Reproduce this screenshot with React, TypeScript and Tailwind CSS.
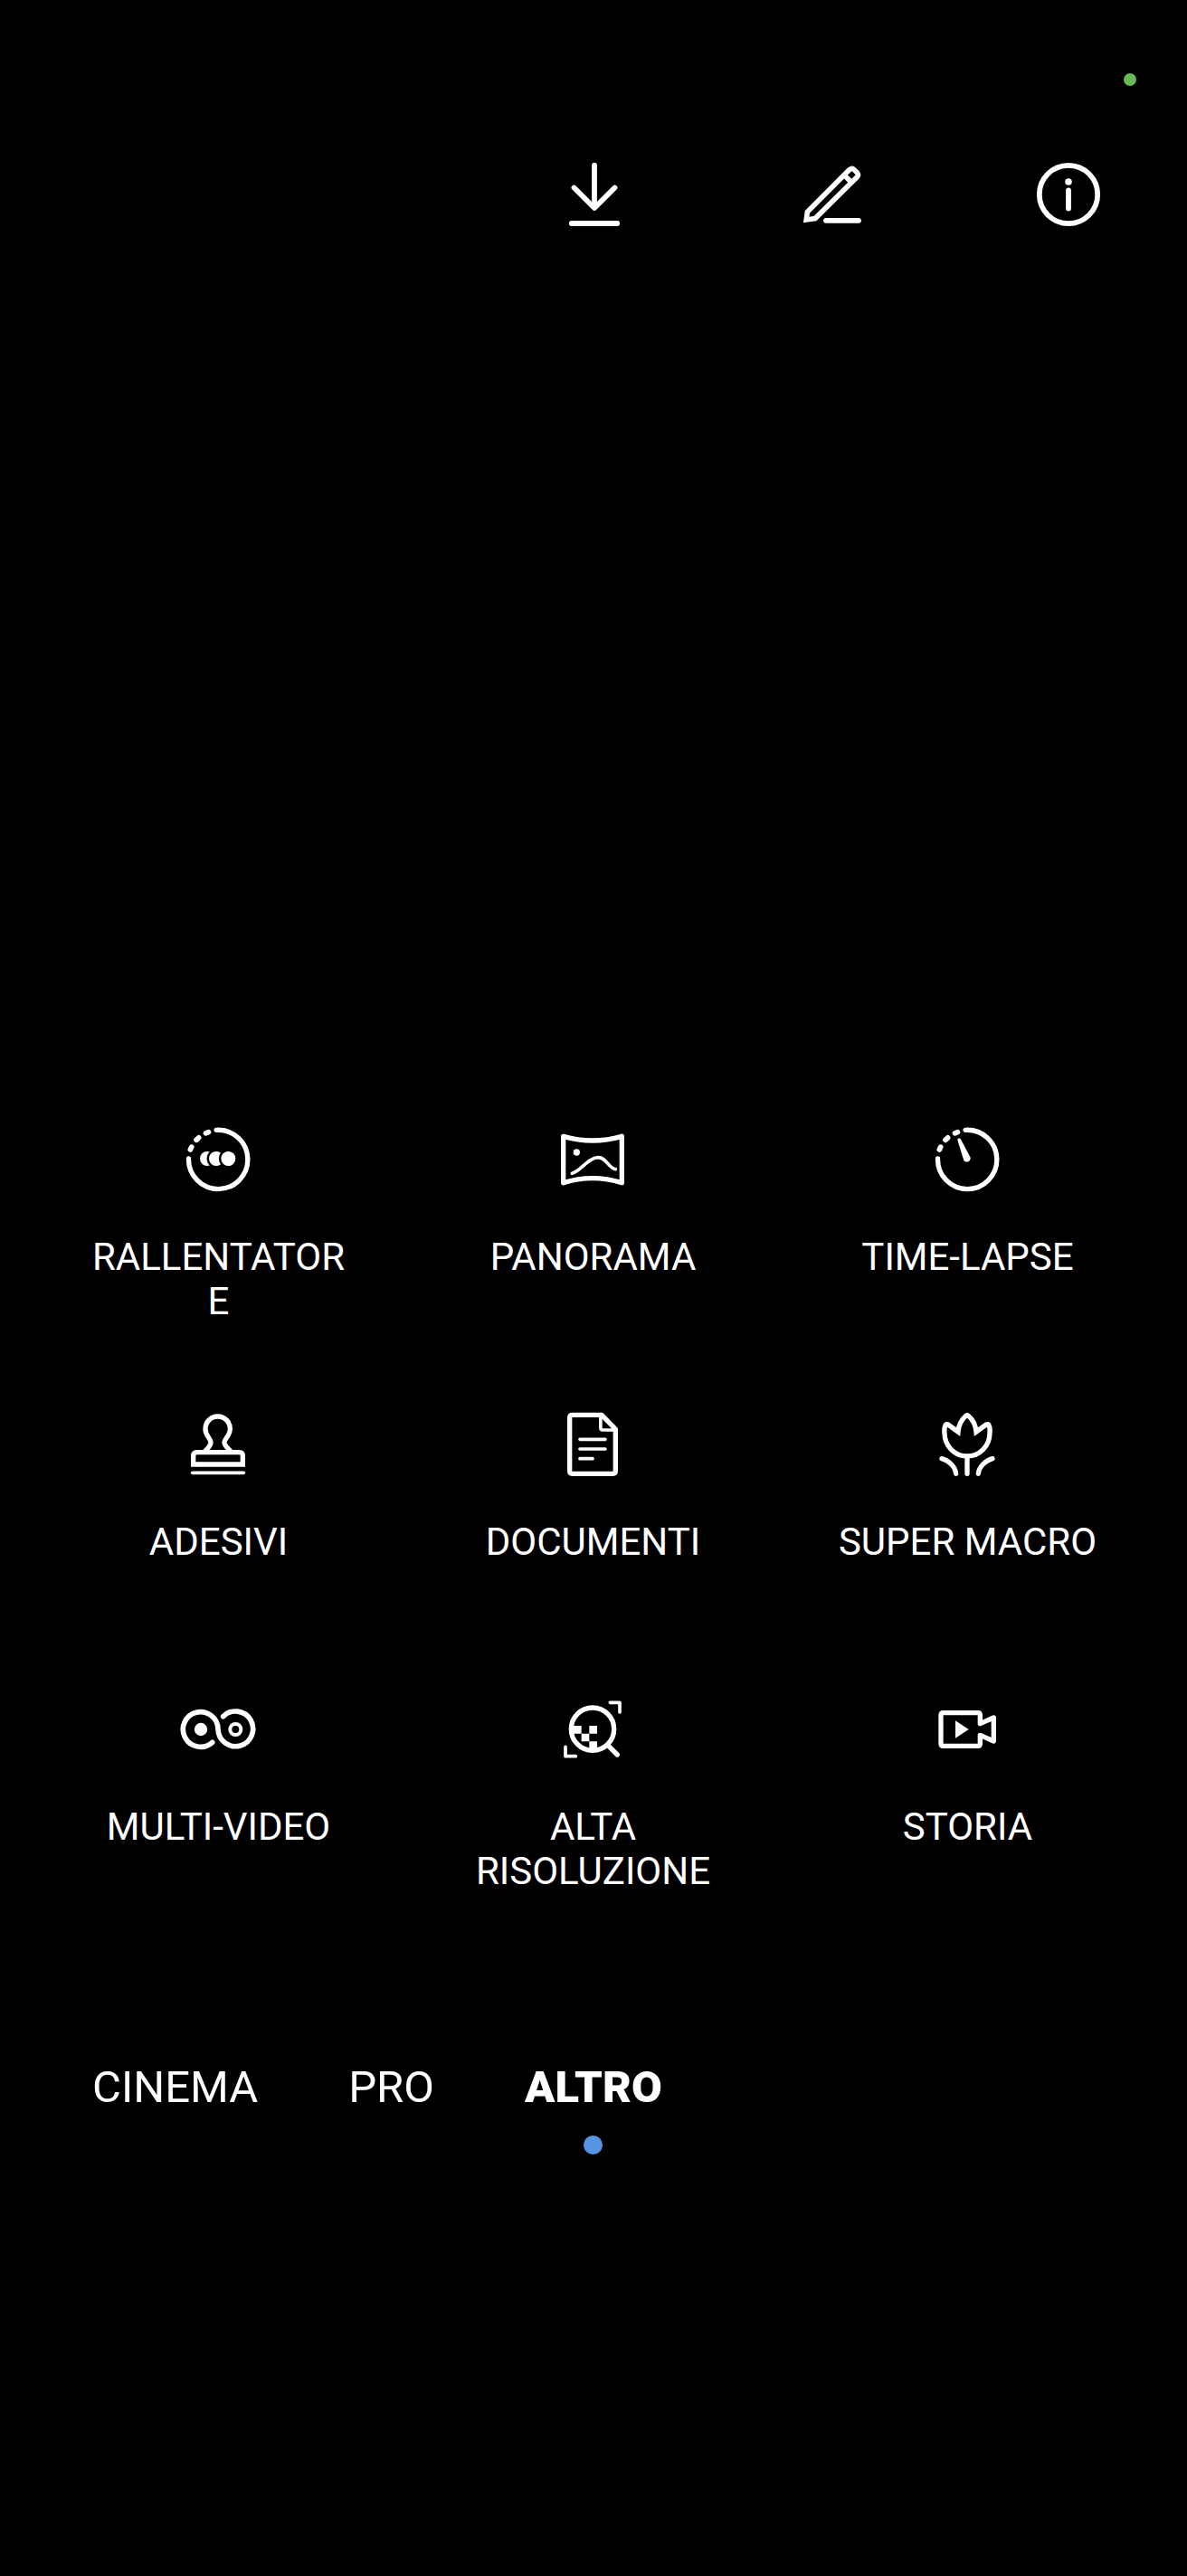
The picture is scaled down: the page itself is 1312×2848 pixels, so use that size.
import type { ReactNode } from "react";

type Mode = {
  label: string;
  viewBox: string;
  icon: ReactNode;
};

const modes: Mode[] = [
  {
    label: "RALLENTATORE",
    viewBox: "3 0 300 300",
    icon: (
      <>
        <path d="M147 58A98 98 0 1 1 55.5 153" />
        <path d="M112.500 68.500l9-3.500M81 91l8-7.500M61 123l4-8.500" strokeWidth="17" />
        <g stroke="none">
          <circle cx="117" cy="153" r="24" fill="white" />
          <circle cx="147" cy="153" r="31.5" fill="black" />
          <circle cx="147" cy="153" r="24" fill="white" />
          <circle cx="187" cy="153" r="31.5" fill="black" />
          <circle cx="187" cy="153" r="24" fill="white" />
        </g>
      </>
    ),
  },
  {
    label: "PANORAMA",
    viewBox: "0 0 300 300",
    icon: (
      <>
        <path d="M53 79Q150 107 247 79V233Q150 203 53 233Z" />
        <circle cx="97" cy="132" r="11" fill="white" stroke="none" />
        <path d="M82 202C112 194 134 150 168 149C196 149 202 184 226 188" strokeWidth="11" />
      </>
    ),
  },
  {
    label: "TIME-LAPSE",
    viewBox: "-3 0 300 300",
    icon: (
      <>
        <path d="M141 58A98 98 0 1 1 49.5 153" />
        <path d="M106.500 68.500l9-3.500M75 91l8-7.500M55 123l4-8.500" strokeWidth="17" />
        <path d="M115.500 93A5.500 5.500 0 0 1 126 89L158 149A12.500 12.500 0 0 1 136 159Z" fill="white" stroke="none" />
      </>
    ),
  },
  {
    label: "ADESIVI",
    viewBox: "3 0 300 300",
    icon: (
      <>
        <path d="M107 183C115 170 129 162 129 149C129 136 111 128 111 104A41 41 0 0 1 193 104C193 128 174 136 174 149C174 162 190 170 198 183" strokeLinecap="butt" />
        <path d="M71 222V194Q71 182 83 182H223Q235 182 235 194V222Z" strokeLinejoin="miter" />
        <path d="M68 250H238" strokeWidth="11" />
      </>
    ),
  },
  {
    label: "DOCUMENTI",
    viewBox: "0 0 300 300",
    icon: (
      <>
        <path d="M83 58H180L226 105V244Q226 253 217 253H83Q74 253 74 244V67Q74 58 83 58Z" />
        <path d="M176.500 60V100Q176.500 108 184 108H226" strokeWidth="11" />
        <path d="M108 139H192M108 171H192M108 203H150" strokeWidth="11" />
      </>
    ),
  },
  {
    label: "SUPER MACRO",
    viewBox: "-3 0 300 300",
    icon: (
      <>
        <path
          d="M72 118C71 108 72 98 75 92C76 88 80 88 84 90L117 114C119 92 130 72 143 61Q147 57 151 61C164 72 175 92 177 114L210 90C214 88 218 88 219 92C222 98 223 108 222 118C222 162 188 195 147 195C106 195 72 162 72 118Z"
          strokeLinejoin="miter"
        />
        <path d="M147 196V253M63 203C85 208 108 230 110 253M231 203C209 208 186 230 184 253" />
      </>
    ),
  },
  {
    label: "MULTI-VIDEO",
    viewBox: "3 -6 300 300",
    icon: (
      <>
        <path d="M134 193A58 58 0 1 1 153 150A58 58 0 1 0 170 107" strokeWidth="17" />
        <circle cx="96" cy="150" r="21.5" fill="white" stroke="none" />
        <circle cx="211" cy="150" r="18" strokeWidth="12" />
      </>
    ),
  },
  {
    label: "ALTA RISOLUZIONE",
    viewBox: "0 -6 300 300",
    icon: (
      <>
        <circle cx="150" cy="149" r="71" />
        <path d="M200 202L232 234" />
        <path d="M208 61H240V93M60 208V239H94" strokeWidth="11" />
        <path d="M84 138h29v26h-29zM139 138h26v26h-26zM113 164h26v26h-26zM139 190h26v28h-26z" fill="white" stroke="none" />
      </>
    ),
  },
  {
    label: "STORIA",
    viewBox: "-3 -6 300 300",
    icon: (
      <>
        <path d="M190 131V103Q190 95 182 95H68Q60 95 60 103V197Q60 205 68 205H182Q190 205 190 197V169L235 189V111Z" />
        <path d="M108 121L152 150L108 179Z" fill="white" stroke="none" />
      </>
    ),
  },
];

const toolbar = [
  {
    name: "download",
    viewBox: "0 0 80 80",
    icon: <path d="M40 7.700V54M17.500 32.500L40 55L62.500 32.500M14.800 72H65.200" />,
  },
  {
    name: "edit",
    viewBox: "-1 0 80 80",
    icon: (
      <>
        <path d="M11.200 68L12.400 59.200L59 12.500Q61.800 10.500 64 12.500L67.500 16Q69.500 18.300 67.500 20.500L21 66.500Z" strokeWidth="5.6" strokeLinejoin="miter" />
        <path d="M53 18.500L61 26.500" strokeWidth="5.6" strokeLinecap="butt" />
        <path d="M33 68.800H69" />
      </>
    ),
  },
  {
    name: "info",
    viewBox: "0 0 80 80",
    icon: (
      <>
        <circle cx="40" cy="40" r="32.2" />
        <circle cx="40" cy="26" r="3.8" fill="white" stroke="none" />
        <path d="M40 35.500V55.500" />
      </>
    ),
  },
];

export default function App() {
  return (
    <main className="flex h-[2848px] w-[1312px] flex-col bg-black font-['Roboto',sans-serif] text-white">
      {/* Camera-in-use indicator */}
      <div className="flex justify-end pt-[81px] pr-14">
        <span className="size-3.5 rounded-full bg-[#68b955]" />
      </div>

      {/* Toolbar */}
      <header className="mt-20 flex justify-end gap-[182px] pr-[91px]">
        {toolbar.map((t) => (
          <button key={t.name} aria-label={t.name}>
            <svg
              viewBox={t.viewBox}
              className="block size-20"
              fill="none"
              stroke="white"
              strokeWidth="5.8"
              strokeLinecap="round"
              strokeLinejoin="round"
            >
              {t.icon}
            </svg>
          </button>
        ))}
      </header>

      {/* Shooting modes */}
      <section className="mt-[975px] grid grid-cols-[repeat(3,290px)] gap-x-31 pl-24">
        {modes.map((m) => (
          <div key={m.label} className="flex h-[315px] flex-col items-center">
            <svg
              viewBox={m.viewBox}
              className="block size-[100px] shrink-0"
              fill="none"
              stroke="white"
              strokeWidth="16"
              strokeLinecap="round"
              strokeLinejoin="round"
            >
              {m.icon}
            </svg>
            <p className="mt-[35px] w-full pl-px text-center text-[42px] leading-[49px] break-words">{m.label}</p>
          </div>
        ))}
      </section>

      {/* Mode switcher */}
      <nav className="mt-[104px] flex gap-[100px] pl-[102px] text-[49px] leading-[58px]">
        <span>CINEMA</span>
        <span>PRO</span>
        <span className="font-black">ALTRO</span>
      </nav>
      <span className="mt-6 mr-px size-[21px] self-center rounded-full bg-[#5894e4]" />
    </main>
  );
}
